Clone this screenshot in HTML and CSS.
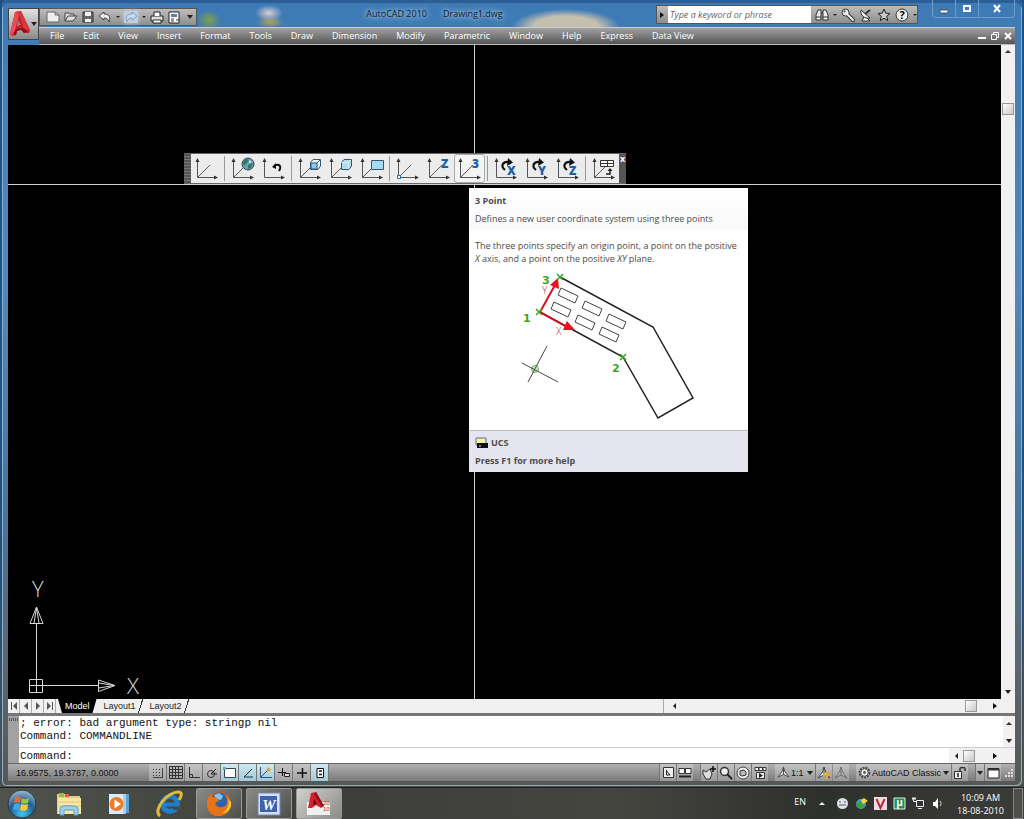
FILE: index.html
```html
<!DOCTYPE html>
<html lang="en">
<head>
    <meta charset="UTF-8">
    <meta name="viewport" content="width=device-width, initial-scale=1.0">
    <title>AutoCAD 2010 - Drawing1.dwg</title>
    <link rel="stylesheet" href="styles.css">
</head>
<body>
    <!-- Shared shapes -->
    <svg class="sprite" aria-hidden="true">
        <symbol id="axes" viewBox="0 0 24 24">
            <path d="M2.5 3V20.5H21" fill="none" stroke="#555"/>
            <path d="M.5 5L2.5 1L4.500 5ZM19 18.500L23 20.500L19 22.500Z" fill="#333"/>
        </symbol>
        <symbol id="diagonal" viewBox="0 0 24 24">
            <path d="M2.500 20.500L15 8" fill="none" stroke="#555"/>
        </symbol>
        <symbol id="rotate" viewBox="0 0 24 24">
            <path d="M11 13C6 9 9 4 15 5" fill="none" stroke="#111" stroke-width="2.200"/>
            <path d="M14 1L19 5.500L13 9Z" fill="#111"/>
        </symbol>
        <symbol id="compass" viewBox="0 0 14 14">
            <path d="M7 1L8.500 6L13 12L7 9L1 12L5.500 6Z" fill="currentColor" stroke="#444"/>
            <path d="M7 1V9" stroke="#444"/>
        </symbol>
    </svg>

    <div class="window">
        <header class="header">
            <button class="app-button" aria-label="Application menu">
                <svg width="20" height="28" viewBox="0 0 20 28">
                    <path d="M0 24L5 2L11 1L20 20L19 23L14 23L11 19L7 21L6 25L3 26Z" fill="#c4202b"/>
                    <path d="M5 2L9 4L4 25L0 24Z" fill="#ee4b54"/>
                    <path d="M11 1L20 20L15 22L9 4L5 2Z" fill="#d93640"/>
                    <path d="M8 10L10.500 15L7 16Z" fill="#8d8d8d"/>
                    <path d="M3 24L6 19L13 18L18 21L14 23L11 20L7 21L6 25Z" fill="#8e0f18"/>
                </svg>
                <span class="caret"></span>
            </button>
            <div class="header-rows">
                <div class="title-row">
                    <div class="quick-bar">
                        <button aria-label="New"><svg width="14" height="12" viewBox="0 0 14 12"><path d="M1 1H9L13 4V11H1Z" fill="#eee" stroke="#666"/><path d="M9 1V4H13" fill="none" stroke="#666"/></svg></button>
                        <button aria-label="Open"><svg width="14" height="12" viewBox="0 0 14 12"><path d="M1 10V2H5L6 3H10V5M1 10L4 5H13L9 10Z" fill="#ddd" stroke="#444"/></svg></button>
                        <button aria-label="Save"><svg width="12" height="12" viewBox="0 0 12 12"><path d="M1 1H11V11H1Z" fill="#666" stroke="#333"/><path d="M3 1H9V5H3ZM3 8H9V11H3Z" fill="#eee"/></svg></button>
                        <button aria-label="Undo"><svg width="14" height="12" viewBox="0 0 14 12"><path d="M1 5L6 1V3C11 3 13 6 11 11C10 8 9 7 6 7V9Z" fill="#eee" stroke="#444"/></svg></button>
                        <span class="caret small"></span>
                        <button class="redo" aria-label="Redo"><svg width="14" height="12" viewBox="0 0 14 12"><path d="M13 5L8 1V3C3 3 1 6 3 11C4 8 5 7 8 7V9Z" fill="#c9dcf4" stroke="#7d9cc6"/></svg></button>
                        <span class="caret small"></span>
                        <button aria-label="Plot"><svg width="14" height="13" viewBox="0 0 14 13"><path d="M1 5H13V10H1Z" fill="#ddd" stroke="#222"/><path d="M4 5V1H10V5M3 9H11V12H3Z" fill="#fff" stroke="#222"/></svg></button>
                        <button aria-label="Sheet set"><svg width="12" height="13" viewBox="0 0 12 13"><path d="M1 1H11V12H1Z" fill="#fff" stroke="#222"/><path d="M3 3H9V6H3Z" fill="#5b7fa0"/><path d="M3 8H6M3 10H6M8 9H11" stroke="#333"/></svg></button>
                        <button class="quick-more" aria-label="Customize"><span class="caret"></span></button>
                    </div>
                    <h1 class="title"><span>AutoCAD 2010</span><span>Drawing1.dwg</span></h1>
                    <div class="info-bar">
                        <button aria-label="Collapse"><span class="caret right"></span></button>
                        <input class="search" type="text" placeholder="Type a keyword or phrase" aria-label="Search">
                        <button aria-label="Find"><svg width="14" height="14" viewBox="0 0 14 14"><path d="M1 12V7L3 2H6V12ZM8 12V2H11L13 7V12ZM6 5H8M1 9H6M8 9H13" fill="#eee" stroke="#333"/></svg></button>
                        <span class="caret small"></span>
                        <button aria-label="Subscription"><svg width="14" height="14" viewBox="0 0 14 14"><path d="M6 6L12 12" stroke="#333" stroke-width="4" stroke-linecap="round"/><circle cx="4.500" cy="4.500" r="3.500" fill="#eee" stroke="#333"/><path d="M6 6L12 12" stroke="#eee" stroke-width="2" stroke-linecap="round"/><circle cx="3.500" cy="3.500" r="1" fill="#444"/></svg></button>
                        <button aria-label="Communication"><svg width="14" height="14" viewBox="0 0 14 14"><path d="M2 2C1 7 5 11 11 10ZM5 9L3 13H11L8 10" fill="#eee" stroke="#333"/><path d="M6 6L11 2" stroke="#333" stroke-width="2"/></svg></button>
                        <button aria-label="Favorites"><svg width="14" height="14" viewBox="0 0 14 14"><path d="M7 1L8.700 5.200L13 5.500L9.700 8.300L10.800 12.600L7 10.200L3.200 12.600L4.300 8.300L1 5.500L5.300 5.200Z" fill="#ccc" stroke="#222"/></svg></button>
                        <button aria-label="Help"><svg width="14" height="14" viewBox="0 0 14 14"><circle cx="7" cy="7" r="6" fill="#eee" stroke="#333"/><text x="7" y="11" class="help-mark">?</text></svg></button>
                        <span class="caret small"></span>
                    </div>
                    <div class="window-buttons">
                        <button aria-label="Minimize"><svg width="10" height="10" viewBox="0 0 10 10"><path d="M1 6H9V9H1Z" fill="#fff" stroke="#456"/></svg></button>
                        <button aria-label="Maximize"><svg width="10" height="10" viewBox="0 0 10 10"><path d="M2 2H8V7H2Z" fill="none" stroke="#fff" stroke-width="2"/></svg></button>
                        <button class="close" aria-label="Close"><svg width="10" height="10" viewBox="0 0 10 10"><path d="M2 1L8 8M8 1L2 8" stroke="#fff" stroke-width="2"/></svg></button>
                    </div>
                </div>
                <nav class="menu-bar">
                    <button>File</button>
                    <button>Edit</button>
                    <button>View</button>
                    <button>Insert</button>
                    <button>Format</button>
                    <button>Tools</button>
                    <button>Draw</button>
                    <button>Dimension</button>
                    <button>Modify</button>
                    <button>Parametric</button>
                    <button>Window</button>
                    <button>Help</button>
                    <button>Express</button>
                    <button>Data View</button>
                    <div class="doc-buttons">
                        <button aria-label="Minimize drawing"><svg width="10" height="10" viewBox="0 0 10 10"><path d="M1 7H9" stroke="#fff" stroke-width="2"/></svg></button>
                        <button aria-label="Restore drawing"><svg width="10" height="10" viewBox="0 0 10 10"><path d="M1.500 3.500H6.500V8.500H1.500ZM3.500 3V1.500H8.500V6.500H7" fill="none" stroke="#fff"/></svg></button>
                        <button aria-label="Close drawing"><svg width="10" height="10" viewBox="0 0 10 10"><path d="M2 2L8 8M8 2L2 8" stroke="#fff" stroke-width="2"/></svg></button>
                    </div>
                </nav>
            </div>
        </header>

        <main class="workspace">
            <div class="canvas">
                <div class="cross-v"></div>
                <div class="cross-h"></div>

                <svg class="ucs" width="120" height="120" viewBox="0 0 120 120">
                    <g fill="none" stroke="#d8d8d8">
                        <path d="M12.500 45V109M12.500 107.500H75"/>
                        <path d="M5.500 101.500H18.500V114.500H5.500ZM12.500 101V115M5 107.500H19"/>
                        <path d="M12.500 29L6 45.500H19ZM12.500 30L10 45M12.500 30L15 45"/>
                        <path d="M91 107.500L74.500 102V113.500ZM90 107.500L75 105M90 107.500L75 110"/>
                    </g>
                    <text x="8" y="19" class="axis-label">Y</text>
                    <text x="103" y="116" class="axis-label">X</text>
                </svg>

                <div class="toolbar" role="toolbar" aria-label="UCS">
                    <div class="grip"></div>
                    <button aria-label="UCS"><svg width="24" height="24" viewBox="0 0 24 24"><use href="#axes"/><use href="#diagonal"/></svg></button>
                    <span class="sep"></span>
                    <button aria-label="World"><svg width="24" height="24" viewBox="0 0 24 24"><use href="#axes"/><use href="#diagonal"/><circle cx="17" cy="7" r="6" fill="#6f9fb8" stroke="#345"/><path d="M12 5C14 2 17 1 18 3L16 6L13 9ZM17 8L22 6L20 11L17 12Z" fill="#2f7a5c"/><path d="M18 3L21 5L18 6Z" fill="#cfe6ee"/></svg></button>
                    <button aria-label="UCS Previous"><svg width="24" height="24" viewBox="0 0 24 24"><use href="#axes"/><path d="M12 9C17 6 20 9 17 14" fill="none" stroke="#111" stroke-width="2"/><path d="M10 10L14 6V12Z" fill="#111"/></svg></button>
                    <span class="sep"></span>
                    <button aria-label="Face UCS"><svg width="24" height="24" viewBox="0 0 24 24"><use href="#axes"/><use href="#diagonal"/><path d="M12.500 5.500L15 2.500H22.500V9L20 12.500H12.500Z" fill="#e8f3fa" stroke="#357"/><path d="M13 6H19V12H13Z" fill="#8fcbe8" stroke="#357"/><path d="M19 6L22 3" stroke="#357"/></svg></button>
                    <button aria-label="Object UCS"><svg width="24" height="24" viewBox="0 0 24 24"><use href="#axes"/><use href="#diagonal"/><path d="M12.500 5.500L15 2.500H22.500V9L20 12.500H12.500Z" fill="#aadcf2" stroke="#357"/><path d="M12.500 5.500H19.500V12M19.500 5.500L22 3" fill="none" stroke="#dff2fb"/></svg></button>
                    <button aria-label="View UCS"><svg width="24" height="24" viewBox="0 0 24 24"><use href="#axes"/><use href="#diagonal"/><path d="M11.500 3.500H23.500V12.500H11.500Z" fill="#a6daf2" stroke="#357"/></svg></button>
                    <span class="sep"></span>
                    <button aria-label="Origin"><svg width="24" height="24" viewBox="0 0 24 24"><use href="#axes"/><use href="#diagonal"/><path d="M1.500 18.500H4.500V21.500H1.500Z" fill="#fff" stroke="#1b6fb5"/></svg></button>
                    <button aria-label="Z Axis Vector"><svg width="24" height="24" viewBox="0 0 24 24"><use href="#axes"/><use href="#diagonal"/><text x="14" y="11" class="tool-letter">Z</text></svg></button>
                    <button class="active" aria-label="3 Point"><svg width="24" height="24" viewBox="0 0 24 24"><use href="#axes"/><use href="#diagonal"/><text x="14" y="11" class="tool-letter">3</text></svg></button>
                    <span class="sep"></span>
                    <button aria-label="Rotate X"><svg width="24" height="24" viewBox="0 0 24 24"><use href="#axes"/><use href="#rotate"/><text x="13" y="18" class="tool-letter">X</text></svg></button>
                    <button aria-label="Rotate Y"><svg width="24" height="24" viewBox="0 0 24 24"><use href="#axes"/><use href="#rotate"/><text x="13" y="18" class="tool-letter">Y</text></svg></button>
                    <button aria-label="Rotate Z"><svg width="24" height="24" viewBox="0 0 24 24"><use href="#axes"/><use href="#rotate"/><text x="13" y="18" class="tool-letter">Z</text></svg></button>
                    <span class="sep"></span>
                    <button aria-label="Apply UCS"><svg width="24" height="24" viewBox="0 0 24 24"><use href="#axes"/><use href="#diagonal"/><path d="M8.500 3.500H21.500V9.500H8.500ZM8.500 6.500H21.500M15.500 3.500V9.500" fill="#fff" stroke="#333"/><path d="M14 17H18V13" fill="none" stroke="#222" stroke-width="1.500"/><path d="M15.500 14L18 11L20.500 14Z" fill="#222"/></svg></button>
                    <button class="toolbar-close" aria-label="Close toolbar">x</button>
                </div>

                <div class="tooltip" role="tooltip">
                    <div class="tip-head">
                        <h2>3 Point</h2>
                        <p>Defines a new user coordinate system using three points</p>
                    </div>
                    <p class="tip-text">The three points specify an origin point, a point on the positive<br><em>X</em> axis, and a point on the positive <em>XY</em> plane.</p>
                    <svg class="tip-figure" width="279" height="165" viewBox="0 0 279 165">
                        <path d="M91 12L184 62L224 133L189 153L154 92L71 47" fill="none" stroke="#222" stroke-width="1.500"/>
                        <g fill="none" stroke="#444">
                            <path d="M92 23L109 31L106 38L89 30Z"/>
                            <path d="M116 36L133 44L130 51L113 43Z"/>
                            <path d="M140 49L157 57L154 64L137 56Z"/>
                            <path d="M85 37L102 45L99 52L82 44Z"/>
                            <path d="M109 50L126 58L123 65L106 57Z"/>
                            <path d="M133 62L150 70L147 77L130 69Z"/>
                        </g>
                        <path d="M86 20L71 47L96 61" fill="none" stroke="#d8101c" stroke-width="2"/>
                        <path d="M89 13L81 20L90 24ZM106 65L98 56L94 65Z" fill="#e8101c"/>
                        <path d="M88 9L94 15M94 9L88 15M67 44L73 50M73 44L67 50M151 89L157 95M157 89L151 95" stroke="#3aa823" stroke-width="1.500"/>
                        <circle cx="66" cy="104" r="3.500" fill="#cfe8cb" stroke="#7da878"/>
                        <path d="M53 98L89 117M78 81L59 117" stroke="#444"/>
                        <g class="point-label">
                            <text x="54" y="57">1</text>
                            <text x="143" y="107">2</text>
                            <text x="73" y="19">3</text>
                        </g>
                        <g class="dir-label">
                            <text x="73" y="29">Y</text>
                            <text x="87" y="70">X</text>
                        </g>
                    </svg>
                    <div class="tip-foot">
                        <p><svg width="13" height="12" viewBox="0 0 13 12"><path d="M1 1H11V8H1Z" fill="#f4f2a8" stroke="#5b6a94"/><path d="M2 6H13V11H2Z" fill="#111"/><path d="M4 9H6" stroke="#ddd"/></svg>UCS</p>
                        <p>Press F1 for more help</p>
                    </div>
                </div>
            </div>
            <div class="scroll-v">
                <button aria-label="Scroll up"><span class="caret up"></span></button>
                <div class="thumb"></div>
                <button aria-label="Scroll down"><span class="caret"></span></button>
            </div>
        </main>

        <div class="tab-row">
            <div class="tab-nav">
                <button aria-label="First tab"><svg width="8" height="8" viewBox="0 0 8 8"><path d="M1.500 0V8" stroke="#555"/><path d="M7 0V8L3 4Z" fill="#555"/></svg></button>
                <button aria-label="Previous tab"><svg width="8" height="8" viewBox="0 0 8 8"><path d="M6 0V8L2 4Z" fill="#555"/></svg></button>
                <button aria-label="Next tab"><svg width="8" height="8" viewBox="0 0 8 8"><path d="M2 0V8L6 4Z" fill="#555"/></svg></button>
                <button aria-label="Last tab"><svg width="8" height="8" viewBox="0 0 8 8"><path d="M6.500 0V8" stroke="#555"/><path d="M1 0V8L5 4Z" fill="#555"/></svg></button>
            </div>
            <div class="tabs">
                <button class="tab selected">Model</button>
                <button class="tab">Layout1</button>
                <button class="tab">Layout2</button>
            </div>
            <div class="scroll-h">
                <button aria-label="Scroll left"><span class="caret left"></span></button>
                <div class="thumb"></div>
                <button aria-label="Scroll right"><span class="caret right"></span></button>
            </div>
        </div>

        <section class="command" aria-label="Command line">
            <div class="command-grip"></div>
            <div class="command-body">
                <div class="history">
                    <div class="history-text">; error: bad argument type: stringp nil<br>Command: COMMANDLINE</div>
                    <div class="history-scroll">
                        <button aria-label="History up"><span class="caret up"></span></button>
                        <button aria-label="History down"><span class="caret"></span></button>
                    </div>
                </div>
                <div class="prompt">
                    <label for="command">Command:</label>
                    <input id="command" type="text">
                    <div class="prompt-scroll">
                        <button aria-label="Prompt left"><span class="caret left"></span></button>
                        <div class="thumb"></div>
                        <button aria-label="Prompt right"><span class="caret right"></span></button>
                    </div>
                </div>
            </div>
        </section>

        <footer class="status">
            <span class="coords">16.9575, 19.3787, 0.0000</span>
            <div class="toggles">
                <button aria-label="Snap"><svg width="12" height="12" viewBox="0 0 12 12"><path d="M1 2.500H9M1 5.500H9M1 8.500H9" stroke="#333" stroke-dasharray="1 2"/><path d="M10.500 1V10M1 10.500H11" stroke="#444"/></svg></button>
                <button aria-label="Grid"><svg width="14" height="13" viewBox="0 0 14 13"><path d="M.5 .5H13.500V12.500H.5ZM3.500 0V13M6.500 0V13M9.500 0V13M0 3.500H14M0 6.500H14M0 9.500H14" fill="none" stroke="#333"/></svg></button>
                <button aria-label="Ortho"><svg width="12" height="12" viewBox="0 0 12 12"><path d="M1.500 0V10.500H12M1.500 7.500H4.500V10" fill="none" stroke="#333"/></svg></button>
                <button aria-label="Polar"><svg width="12" height="12" viewBox="0 0 12 12"><circle cx="5" cy="7" r="3.500" fill="none" stroke="#333"/><path d="M5 7L10 2M5 7H11" stroke="#222"/></svg></button>
                <button class="on" aria-label="Object snap"><svg width="13" height="13" viewBox="0 0 13 13"><path d="M1.500 2.500H12.500V11.500H1.500Z" fill="#fff" stroke="#345"/><path d="M0 1H3V4H0Z" fill="#78a8c0"/></svg></button>
                <button class="on" aria-label="Object snap tracking"><svg width="12" height="12" viewBox="0 0 12 12"><path d="M10 2L2 10H11" fill="none" stroke="#234"/></svg></button>
                <button class="on" aria-label="Dynamic UCS"><svg width="13" height="13" viewBox="0 0 13 13"><path d="M1.500 1V11.500H13M2 11L9 4" fill="none" stroke="#357"/><path d="M7 4L10 1L12 4L9 6Z" fill="#d9a545"/></svg></button>
                <button aria-label="Dynamic input"><svg width="12" height="12" viewBox="0 0 12 12"><path d="M4.500 1V9M0 5.500H8" stroke="#111"/><path d="M6.500 6.500H11.500V9.500H6.500Z" fill="#ddd" stroke="#222"/></svg></button>
                <button aria-label="Line weight"><svg width="12" height="12" viewBox="0 0 12 12"><path d="M6.500 1V11M1 6H11" stroke="#111" stroke-width="1.500"/></svg></button>
                <button class="on" aria-label="Quick properties"><svg width="12" height="12" viewBox="0 0 12 12"><path d="M3 1.500H9.500V10.500H3Z" fill="#fff" stroke="#111"/><path d="M5 4H8M5 7.500H8" stroke="#111" stroke-width="1.500"/></svg></button>
            </div>
            <div class="status-group">
                <button aria-label="Model"><svg width="13" height="13" viewBox="0 0 13 13"><path d="M1.500 1.500H11.500V11.500H1.500Z" fill="#eee" stroke="#333"/><path d="M4.500 4V9H8L4.500 5" fill="none" stroke="#222"/></svg></button>
                <button aria-label="Quick view layouts"><svg width="14" height="13" viewBox="0 0 14 13"><path d="M1 2.500H6.500V7.500H1ZM7.500 2.500H13V7.500H7.500Z" fill="#fff" stroke="#333"/><path d="M1 10.500H13" stroke="#222" stroke-width="2"/></svg></button>
            </div>
            <div class="status-group">
                <button aria-label="Pan"><svg width="14" height="14" viewBox="0 0 14 14"><path d="M1 4L4 6L8 3L10 8L8 13H4L1 8Z" fill="#ddd" stroke="#333"/><path d="M11 0V6M8 3H14" stroke="#111" stroke-width="1.500"/></svg></button>
                <button aria-label="Zoom"><svg width="14" height="14" viewBox="0 0 14 14"><circle cx="5.500" cy="5.500" r="4" fill="#eee" stroke="#333" stroke-width="1.500"/><path d="M8 8L13 13" stroke="#222" stroke-width="2"/></svg></button>
                <button aria-label="Steering wheel"><svg width="14" height="14" viewBox="0 0 14 14"><circle cx="7" cy="7" r="6" fill="#eee" stroke="#444"/><path d="M4 5L8 4L10 6V9L6 10L4 9Z" fill="#bbb" stroke="#333"/></svg></button>
                <button aria-label="Show motion"><svg width="13" height="13" viewBox="0 0 13 13"><path d="M1 1.500H4.500V4.500H1ZM5 1.500H8.500V4.500H5ZM9 1.500H12V4.500H9Z" fill="#fff" stroke="#333"/><path d="M2.500 6.500H10.500V12.500H2.500Z" fill="#eee" stroke="#333"/><path d="M5 7V12L9 9.500Z" fill="#222"/></svg></button>
            </div>
            <div class="status-group">
                <label class="picker">
                    <svg class="pale" width="13" height="13"><use href="#compass"/></svg>
                    <select class="scale" aria-label="Annotation scale"><option>1:1</option></select>
                    <span class="caret"></span>
                </label>
                <button class="pale" aria-label="Annotation visibility"><svg width="14" height="14" viewBox="0 0 14 14"><use href="#compass"/><path d="M10 5V13M6 9H14" stroke="#e6a82c" stroke-width="2"/></svg></button>
                <button class="faded" aria-label="Auto scale"><svg width="14" height="14"><use href="#compass"/></svg></button>
            </div>
            <div class="status-group">
                <label class="picker">
                    <svg width="13" height="13" viewBox="0 0 14 14"><circle cx="7" cy="7" r="5" fill="#ddd" stroke="#444" stroke-width="2.500" stroke-dasharray="2 1"/><circle cx="7" cy="7" r="4" fill="#eee" stroke="#555"/><circle cx="7" cy="7" r="1.500" fill="#555"/></svg>
                    <select class="space" aria-label="Workspace"><option>AutoCAD Classic</option></select>
                    <span class="caret"></span>
                </label>
                <button aria-label="Lock"><svg width="14" height="14" viewBox="0 0 14 14"><path d="M7 6V2.500C7 1 12 1 12 2.500V5" fill="none" stroke="#333" stroke-width="1.500"/><path d="M1.500 5.500H8.500V12.500H1.500Z" fill="#eee" stroke="#333"/><path d="M5 7V11" stroke="#222" stroke-width="1.500"/></svg></button>
            </div>
            <div class="status-group last">
                <button class="narrow" aria-label="Status menu"><span class="caret"></span></button>
                <button aria-label="Clean screen"><svg width="13" height="12" viewBox="0 0 13 12"><path d="M1 1.500H12V11H1Z" fill="#fff" stroke="#222"/><path d="M1 2.500H12" stroke="#333" stroke-width="2"/></svg></button>
            </div>
            <svg class="size-grip" width="10" height="10" viewBox="0 0 10 10"><path d="M7 1H9V3H7ZM4 4H6V6H4ZM7 4H9V6H7ZM1 7H3V9H1ZM4 7H6V9H4ZM7 7H9V9H7Z" fill="#ddd"/></svg>
        </footer>
    </div>

    <div class="taskbar">
        <button class="start" aria-label="Start">
            <svg width="30" height="30" viewBox="0 0 30 30">
                <defs><radialGradient id="orb" cx=".5" cy=".85" r=".9"><stop offset="0" stop-color="#41c8f0"/><stop offset=".5" stop-color="#1f5f94"/><stop offset="1" stop-color="#b4c6d2"/></radialGradient></defs>
                <circle cx="15" cy="15" r="14" fill="url(#orb)" stroke="#26343f"/>
                <path d="M8 9C10 7 12 8 14 9L13 14C11 13 9 13 7 14Z" fill="#ee6a35"/>
                <path d="M15 9C17 11 20 10 22 9L21 14C18 15 16 15 14 14Z" fill="#9bc93c"/>
                <path d="M7 15C9 14 11 14 13 15L12 21C10 20 8 20 6 21Z" fill="#4aa5e6"/>
                <path d="M14 15C16 16 19 16 21 15L20 21C17 22 15 22 13 21Z" fill="#fbc935"/>
            </svg>
        </button>
        <button class="task" aria-label="Explorer">
            <svg width="28" height="26" viewBox="0 0 28 26"><path d="M2 3H10L12 5H25V23H2Z" fill="#e8cd78"/><path d="M3 7H26V23H3Z" fill="#f7e6a4"/><path d="M4 2H9V6H4Z" fill="#8cc152"/><path d="M10 3H14V6H10Z" fill="#e2564a"/><path d="M3 11H26M3 15H26" stroke="#e3c76d"/><path d="M5 24V17C5 14 23 14 23 17V24H19V19H9V24Z" fill="#9ed1ee" stroke="#5b9fc7"/></svg>
        </button>
        <button class="task" aria-label="Media player">
            <svg width="24" height="24" viewBox="0 0 24 24"><path d="M6 2H22V21H6Z" fill="#5ba2cf"/><path d="M4 2H19V22H4Z" fill="#a9d3ec"/><path d="M2 2H16V22H2Z" fill="#dbeaf4"/><circle cx="9.500" cy="12" r="7" fill="#ee7a27"/><path d="M7.500 7.500V16.500L14 12Z" fill="#fff"/></svg>
        </button>
        <button class="task" aria-label="Internet Explorer">
            <svg width="28" height="28" viewBox="0 0 28 28"><circle cx="15" cy="14" r="7.500" fill="none" stroke="#1f7fca" stroke-width="5"/><path d="M9 14.500H23" stroke="#1f7fca" stroke-width="4"/><path d="M18 16.500H27V20H18Z" fill="#484a44"/><path d="M5 26C-3 20 13 1 24 2C28 3 26 7 24 10" fill="none" stroke="#e3b93c" stroke-width="3"/></svg>
        </button>
        <button class="task open" aria-label="Firefox">
            <svg width="28" height="28" viewBox="0 0 28 28"><circle cx="14" cy="14" r="12" fill="#e66000"/><circle cx="14" cy="11" r="8.500" fill="#2d65ad"/><path d="M9 5L14 3L18 6L16 10L11 9Z" fill="#87c0e8"/><path d="M2 10L5 4L8 7L12 8L14 11L10 13C11 18 18 19 22 14C23 10 21 7 20 4C26 9 28 17 22 23C15 29 3 26 2 16Z" fill="#e87216"/><path d="M23 9C25 13 23 20 17 23C22 24 27 18 26 12Z" fill="#fbc643"/></svg>
        </button>
        <button class="task open" aria-label="Word">
            <svg width="24" height="24" viewBox="0 0 24 24"><path d="M1 1H23V23H1Z" fill="#d5e0f2" stroke="#7089b8"/><path d="M3 4H20V20H3Z" fill="#3f62ad"/><text x="12" y="18" class="word-mark">W</text></svg>
        </button>
        <button class="task open current" aria-label="AutoCAD">
            <svg width="26" height="26" viewBox="0 0 26 26"><path d="M1 11H24V24H1Z" fill="#f1efef"/><path d="M2 17L5 2L10 1L18 15L15 17L10 14L6 17Z" fill="#d3202c"/><path d="M8 3L16 16L18 15L10 1Z" fill="#8e101a"/><path d="M8 8L11 13L7 14Z" fill="#6a0a12"/><text x="17" y="14" class="year-mark">20</text><text x="17" y="20" class="year-mark">10</text></svg>
        </button>
        <div class="tray">
            <span class="lang">EN</span>
            <button aria-label="Show hidden icons"><span class="caret up light"></span></button>
            <button aria-label="Messenger"><svg width="13" height="13" viewBox="0 0 13 13"><circle cx="6.500" cy="6.500" r="5.500" fill="#dfe4ea"/><path d="M3 5H5M8 5H10M3 8H10" stroke="#556"/></svg></button>
            <button aria-label="Downloads"><svg width="13" height="13" viewBox="0 0 13 13"><circle cx="6" cy="7" r="5" fill="#4b9ad8"/><path d="M6 3L9 1L13 4L8 7Z" fill="#f0d43a"/><path d="M1 5L5 4L7 7L11 8L7 12L2 10Z" fill="#3aa23e"/></svg></button>
            <button aria-label="V tray"><svg width="13" height="13" viewBox="0 0 13 13"><path d="M0 0H13V13H0Z" fill="#f1dde0"/><path d="M2.500 2L6.500 11L10.500 2" fill="none" stroke="#b5283f" stroke-width="2"/></svg></button>
            <button aria-label="Torrent"><svg width="13" height="13" viewBox="0 0 13 13"><path d="M1 1H12V12H1Z" fill="#1f8f55" stroke="#e3f3e9"/><text x="6.500" y="9" class="mu-mark">µ</text></svg></button>
            <button aria-label="Network"><svg width="13" height="13" viewBox="0 0 13 13"><path d="M4.500 3.500H11.500V9.500H4.500ZM6 11.500H10M1.500 1V4.500H4" fill="#333" stroke="#eee"/><path d="M0 1.500H4" stroke="#eee" stroke-width="2"/></svg></button>
            <button aria-label="Volume"><svg width="13" height="13" viewBox="0 0 13 13"><path d="M2 5H4L7 1V12L4 9H2Z" fill="#fff"/><path d="M9 4C10.500 6 10.500 7 9 9" fill="none" stroke="#ddd"/></svg></button>
            <div class="clock"><span>10:09 AM</span><span>18-08-2010</span></div>
            <button class="show-desktop" aria-label="Show desktop"></button>
        </div>
    </div>
</body>
</html>
```
FILE: styles.css
```css
* {
    box-sizing: border-box;
}
body {
    margin: 0;
    height: 100vh;
    display: flex;
    flex-direction: column;
    background: linear-gradient(#1d5287, #1f5488 30%, #24507a 70%, #4a5052 90%);
    font-family: "Open Sans", "Noto Sans", sans-serif;
    font-size: 9px;
    overflow: hidden;
}
h1, h2, p {
    margin: 0;
    font-weight: normal;
}
button {
    display: flex;
    align-items: center;
    justify-content: center;
    margin: 0;
    padding: 0;
    border: none;
    background: none;
    color: inherit;
    font: inherit;
}
svg {
    display: block;
    flex: none;
    overflow: visible;
}
.sprite {
    position: absolute;
    width: 0;
    height: 0;
}

/* Small arrows */
.caret {
    flex: none;
    border: 3px solid transparent;
    border-top: 4px solid #222;
    border-bottom: none;
}
.caret.small {
    border-width: 2px;
    border-top-width: 2px;
    align-self: center;
}
.caret.up {
    border: 3px solid transparent;
    border-bottom: 3px solid #333;
    border-top: none;
}
.caret.left {
    border: 3px solid transparent;
    border-right: 3px solid #222;
    border-left: none;
}
.caret.right {
    border: 3px solid transparent;
    border-left: 4px solid #111;
    border-right: none;
}
.caret.light {
    border-bottom-color: #eee;
}

/* Window frame */
.window {
    flex: 1;
    min-height: 0;
    display: flex;
    flex-direction: column;
    margin: 0 2px 1px;
    padding: 0 7px 5px 6px;
    border-radius: 6px 6px 5px 5px;
    background: linear-gradient(#3d7ab5, #5288bd 35%, #47769f 65%, #5c6670 85%, #555855);
    box-shadow: inset 0 3px 0 #2a5e94, inset 1px 0 0 #8fb0cc, inset -1px -1px 0 #9aa8b2;
}
.header {
    display: flex;
    flex: none;
    background:
        radial-gradient(ellipse 12px 10px at 201px 20px, #7fa04a, transparent),
        radial-gradient(ellipse 14px 8px at 261px 13px, #dccfd4, transparent),
        radial-gradient(ellipse 14px 6px at 262px 22px, #b8a352, transparent),
        radial-gradient(ellipse 54px 18px at 558px 27px, #c4bfae 60%, transparent);
}
.app-button {
    width: 31px;
    height: 32px;
    margin-top: 8px;
    gap: 1px;
    border: 1px solid #444;
    background: linear-gradient(#e2e2e2, #8a8a8a);
}
.header-rows {
    flex: 1;
}
.title-row {
    display: flex;
    height: 27px;
    color: #101c28;
}
.quick-bar {
    display: flex;
    align-items: center;
    gap: 4px;
    width: 158px;
    height: 18px;
    margin-top: 8px;
    padding-left: 6px;
    border: 1px solid #555;
    background: linear-gradient(#bdbdbd, #8e8e8e);
}
.redo {
    background: #c4cfdc;
    box-shadow: 0 0 4px #c4cfdc;
}
.quick-more {
    margin-left: auto;
    padding: 0 3px;
}
.title {
    flex: 1;
    display: flex;
    justify-content: center;
    gap: 16px;
    padding: 7px 0 0 16px;
    font-size: 9px;
    line-height: 14px;
    text-shadow: 0 0 4px #b9d3ea, 0 0 6px #b9d3ea;
}
.info-bar {
    display: flex;
    align-items: center;
    gap: 4px;
    height: 19px;
    width: 262px;
    margin-top: 5px;
    padding-left: 3px;
    border: 1px solid #555;
    background: linear-gradient(#bdbdbd, #8e8e8e);
}
.search {
    width: 143px;
    height: 17px;
    padding: 0 2px;
    border: none;
    background: #fff;
    font: italic 9px "Open Sans", sans-serif;
}
.search::placeholder {
    color: #666;
}
.help-mark {
    font-size: 11px;
    font-weight: bold;
    text-anchor: middle;
}
.window-buttons {
    display: flex;
    width: 83px;
    height: 18px;
    margin-left: 14px;
    border: 1px solid #6f9cc8;
    border-top: none;
    border-radius: 0 0 4px 4px;
}
.window-buttons button {
    width: 23px;
    border-right: 1px solid #6f9cc8;
}
.window-buttons .close {
    flex: 1;
    border: none;
}
.menu-bar {
    display: flex;
    align-items: center;
    gap: 19px;
    height: 18px;
    padding-left: 11px;
    border-top: 1px solid #ccc;
    border-bottom: 1px solid #bbb;
    background: linear-gradient(#a2a2a2, #555);
    color: #fff;
    line-height: 14px;
}
.doc-buttons {
    display: flex;
    gap: 3px;
    margin-left: auto;
    padding-right: 2px;
}

/* Drawing area */
.workspace {
    flex: 1;
    min-height: 0;
    display: flex;
}
.canvas {
    position: relative;
    flex: 1;
    background: #000;
}
.cross-v {
    position: absolute;
    left: 466px;
    top: 0;
    bottom: 0;
    width: 1px;
    background: #d0d0d0;
}
.cross-h {
    position: absolute;
    top: 139px;
    left: 0;
    right: 0;
    height: 1px;
    background: #d0d0d0;
}
.ucs {
    position: absolute;
    left: 16px;
    bottom: 1px;
}
.axis-label {
    fill: #d8d8d8;
    font-size: 22px;
    font-weight: 300;
}
.scroll-v {
    display: flex;
    flex-direction: column;
    width: 14px;
    padding: 5px 0;
    background: #f1f1f1;
}
.scroll-v .thumb {
    height: 12px;
    margin: 50px 1px auto;
}
.thumb {
    border: 1px solid #999;
    background: linear-gradient(135deg, #fff, #c8c8c8);
}

/* UCS toolbar */
.toolbar {
    position: absolute;
    left: 176px;
    top: 108px;
    display: flex;
    height: 31px;
    border: 1px solid #666;
    border-width: 1px 0;
    background: #ececec;
}
.toolbar button {
    width: 31px;
}
.toolbar .active {
    border: 1px solid #aaa;
    border-radius: 3px;
    background: #f4f4f4;
}
.grip {
    width: 7px;
    background: repeating-linear-gradient(#555 0 2px, #777 2px 3px);
}
.sep {
    width: 1px;
    margin: 2px;
    background: #999;
}
.toolbar .toolbar-close {
    width: 7px;
    align-items: flex-start;
    background: #555;
    color: #fff;
    font-size: 9px;
    font-weight: bold;
    line-height: 9px;
}
.tool-letter {
    fill: #1a62a8;
    font-size: 12px;
    font-weight: 800;
}

/* Tooltip */
.tooltip {
    position: absolute;
    left: 461px;
    top: 143px;
    width: 279px;
    border-radius: 2px;
    background: #fff;
    color: #4c4c4c;
    line-height: 13px;
    white-space: nowrap;
}
.tip-head {
    padding: 6px 6px 5px;
    background: linear-gradient(#fff, #f9f9fa);
}
.tip-head h2 {
    margin-bottom: 5px;
    font-size: 9px;
    font-weight: bold;
}
.tip-text {
    padding: 9px 6px 0;
}
.point-label {
    fill: #3aa823;
    font: bold 11px "DejaVu Sans", sans-serif;
}
.dir-label {
    fill: #a33;
    font: 300 10px "Open Sans", sans-serif;
}
.tip-foot {
    padding: 5px 6px;
    border-top: 1px solid #bbb;
    background: #e5e5f0;
}
.tip-foot p {
    display: flex;
    align-items: center;
    gap: 3px;
    font-weight: bold;
}
.tip-foot p + p {
    margin-top: 5px;
}

/* Layout tabs */
.tab-row {
    display: flex;
    flex: none;
    height: 14px;
    background: #f0f0f0;
    font-family: "Liberation Sans", Arial, sans-serif;
    color: #222;
}
.tab-nav {
    display: flex;
}
.tab-nav button {
    width: 12px;
    border-right: 1px solid #aaa;
}
.tabs {
    flex: 1;
    display: flex;
    padding-left: 2px;
}
.tab {
    padding: 0 7px;
    background: linear-gradient(108deg, transparent calc(100% - 5px), #333 calc(100% - 5px), #333 calc(100% - 4px), transparent calc(100% - 4px));
}
.tab.selected {
    background: #000;
    color: #fff;
    clip-path: polygon(0 0, 100% 0, calc(100% - 4px) 100%, 4px 100%);
}
.scroll-h {
    display: flex;
    align-items: center;
    width: 35%;
    padding: 0 18px 0 9px;
    border-left: 1px solid #aaa;
}
.scroll-h .thumb {
    width: 12px;
    height: 12px;
    margin: 0 16px 0 auto;
}

/* Command line */
.command {
    display: flex;
    flex: none;
    height: 50px;
    border-top: 3px solid #777;
    background: #fff;
    color: #111;
    font: 11px/13px "Liberation Mono", "Courier New", monospace;
}
.command-grip {
    width: 11px;
    background: repeating-linear-gradient(90deg, #555 0 1px, transparent 1px 2px) 1px 2px / 9px 3px no-repeat, #a2a2a2;
}
.command-body {
    flex: 1;
}
.history {
    display: flex;
    height: 32px;
    border-bottom: 1px solid #ccc;
}
.history-text {
    flex: 1;
    padding: 1px;
}
.history-scroll {
    display: flex;
    flex-direction: column;
    justify-content: space-between;
    width: 12px;
    padding: 6px 0 4px;
    background: #f1f1f1;
}
.prompt {
    display: flex;
    align-items: center;
    height: 15px;
    padding-left: 1px;
}
.prompt label {
    padding-top: 2px;
}
.prompt input {
    flex: 1;
    min-width: 0;
    height: 13px;
    padding: 0 4px;
    border: none;
    font: inherit;
}
.prompt-scroll {
    display: flex;
    align-items: center;
    width: 66px;
    height: 100%;
    padding: 0 18px 0 6px;
    background: #f1f1f1;
}
.prompt-scroll .thumb {
    width: 12px;
    height: 12px;
    margin: 0 auto 0 5px;
}

/* Status bar */
.status {
    display: flex;
    flex: none;
    align-items: center;
    height: 18px;
    padding-left: 8px;
    border-top: 1px solid #666;
    background: linear-gradient(#b0b0b0, #7a7a7a);
    color: #111;
    font-family: "Liberation Sans", Arial, sans-serif;
}
.coords {
    width: 133px;
}
.toggles {
    display: flex;
    margin-right: auto;
}
.toggles button {
    width: 18px;
    height: 17px;
    border-right: 1px solid #777;
    background: linear-gradient(#c4c4c4, #a2a2a2);
}
.toggles .on {
    background: linear-gradient(#cfe9f2, #9fc9da);
}
.status-group {
    display: flex;
    height: 17px;
    margin-right: 7px;
    background: linear-gradient(#c4c4c4, #999);
}
.status-group.last {
    margin-right: 3px;
}
.status-group button {
    width: 17px;
    border-left: 1px solid #777;
}
.status-group .narrow {
    width: 9px;
}
.picker {
    display: flex;
    align-items: center;
    gap: 1px;
    padding: 0 2px;
}
.picker select {
    appearance: none;
    padding: 0;
    border: none;
    background: none;
    color: inherit;
    font: inherit;
}
.scale {
    width: 15px;
}
.space {
    width: 70px;
}
.pale {
    color: #eee;
}
.status-group .faded {
    color: #bbb;
    opacity: 0.6;
}
.size-grip {
    margin-right: 1px;
}

/* Taskbar */
.taskbar {
    display: flex;
    flex: none;
    align-items: center;
    height: 32px;
    padding-left: 6px;
    border-top: 1px solid #1c1e1c;
    background: linear-gradient(90deg, #50534c, #3c3e39 30%, #454540 60%, #2e302c 80%, #3b3c39);
    color: #fff;
}
.start {
    width: 32px;
    margin-right: 8px;
}
.task {
    width: 46px;
    height: 31px;
    margin-right: 4px;
}
.task.open {
    border: 1px solid #999;
    border-radius: 2px;
    background: linear-gradient(135deg, #8a8b88, #4c4e4a);
}
.task.current {
    background: linear-gradient(135deg, #d0d0ce, #8b8c8a);
}
.word-mark {
    fill: #fff;
    font: italic bold 15px "Liberation Serif", serif;
    text-anchor: middle;
}
.year-mark {
    fill: #a33;
    font: 6px "Liberation Sans", sans-serif;
}
.mu-mark {
    fill: #fff;
    font: bold 10px "Open Sans", sans-serif;
    text-anchor: middle;
}
.tray {
    display: flex;
    align-items: center;
    gap: 6px;
    height: 100%;
    margin-left: auto;
}
.tray .caret {
    margin: 0 5px 0 7px;
}
.lang {
    padding-bottom: 4px;
}
.clock {
    display: flex;
    flex-direction: column;
    align-items: center;
    margin: 0 3px 0 7px;
    line-height: 13px;
}
.show-desktop {
    width: 10px;
    height: 31px;
    margin-right: 1px;
    border: 1px solid #888;
    background: #4d4f4c;
}
```
